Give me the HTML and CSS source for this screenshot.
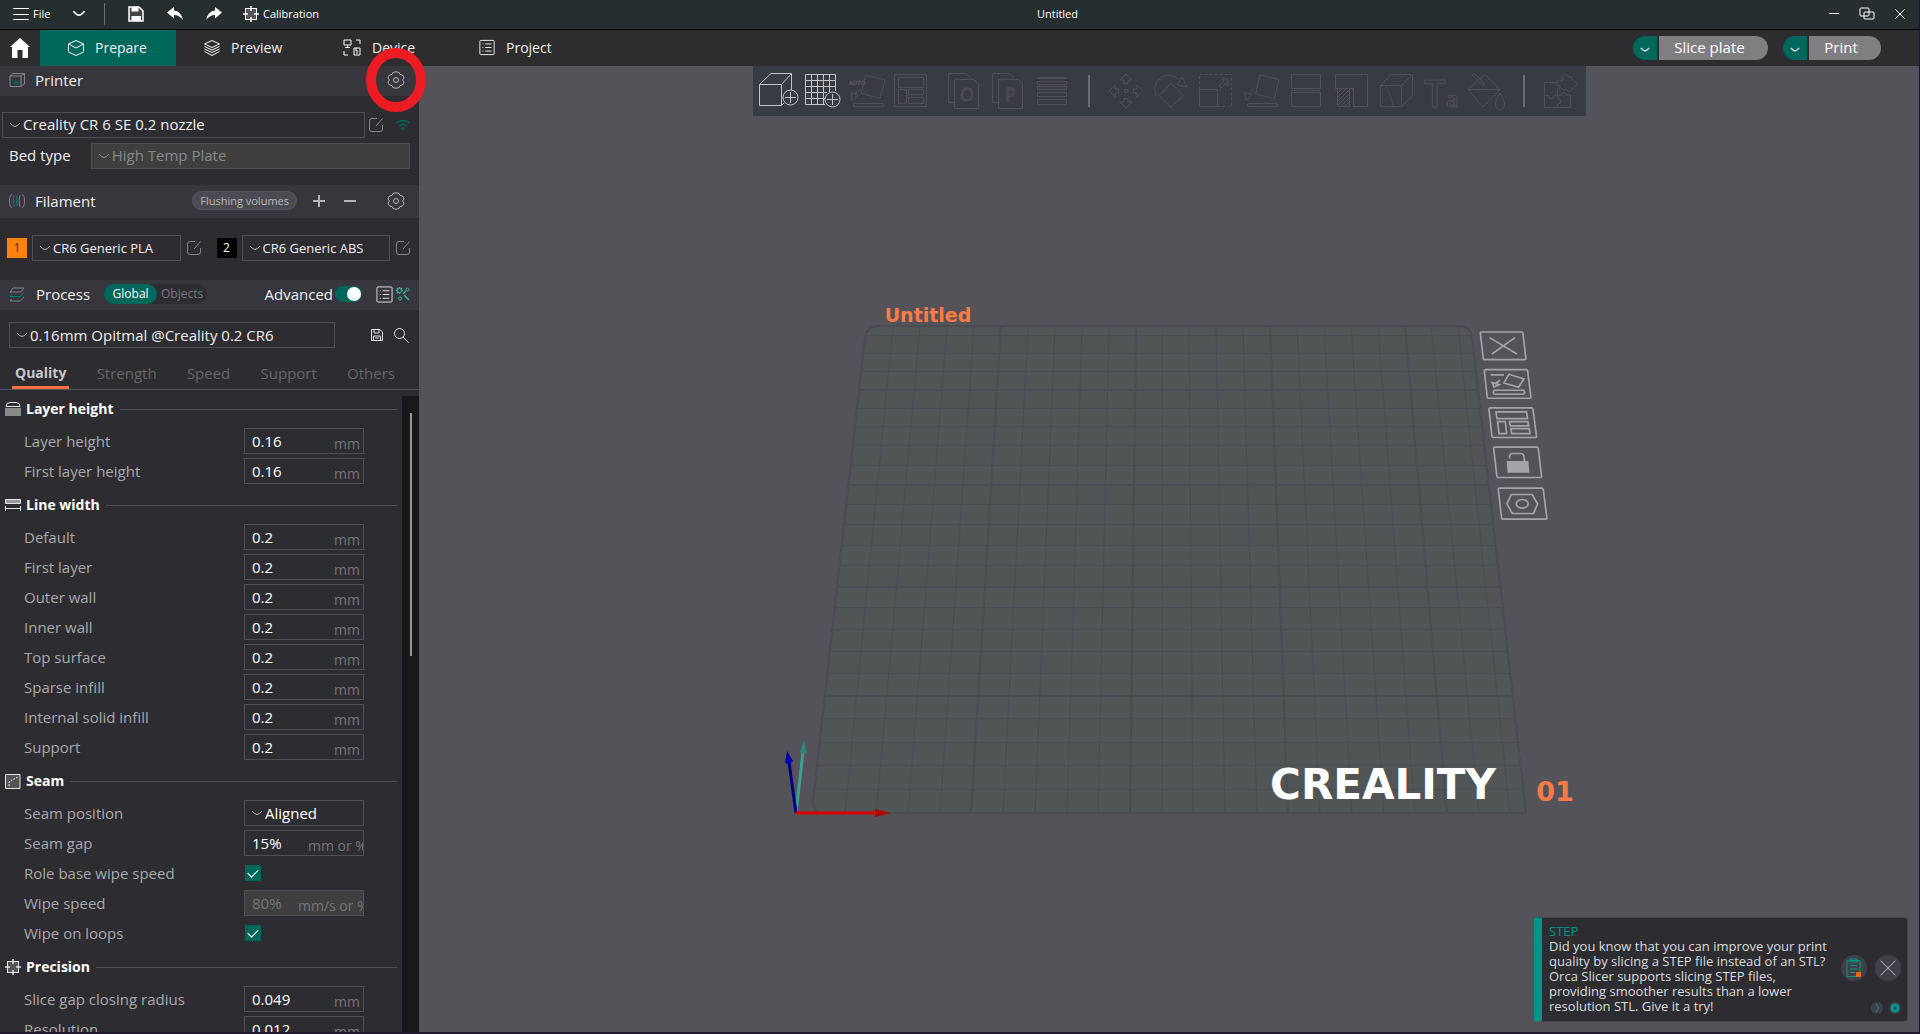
FILE: index.html
```html
<!DOCTYPE html>
<html lang="en">
<head>
<meta charset="utf-8">
<title>Untitled</title>
<link rel="stylesheet" href="styles.css">
</head>
<body>
<svg class="defs" aria-hidden="true">
  <symbol id="chevron" viewBox="0 0 12 8"><path d="M1 2Q4 5.500 6 5.500T11 2"/></symbol>
  <symbol id="edit" viewBox="0 0 16 16"><path d="M9 1.500H4Q1.500 1.500 1.500 4V12Q1.500 14.500 4 14.500H12Q14.500 14.500 14.500 12V8M8 9 14.500 1.500"/></symbol>
  <symbol id="gear" viewBox="0 0 18 18"><circle cx="9" cy="9" r="2.500"/><path d="M6 1.500Q9 0 12 1.500L13 3.500 15.500 4Q17 6 17 7L15.500 9 17 11Q17 12 15.500 14L13 14.500 12 16.500Q9 18 6 16.500L5 14.500 2.500 14Q1 12 1 11L2.500 9 1 7Q1 6 2.500 4L5 3.500Z"/></symbol>
  <symbol id="list" viewBox="0 0 18 18"><rect x="1" y="1" width="16" height="16" rx="1"/><path d="M4 5H5M4 9H5M4 13H5M7 5H14M7 9H14M7 13H14"/></symbol>
  <symbol id="target" viewBox="0 0 16 16"><rect x="2.500" y="2.500" width="11" height="11" fill="#555"/><path d="M8 0V5M8 11V16M0 8H5M11 8H16" stroke-width="1.500"/></symbol>
</svg>

<header class="titlebar">
  <div class="title-left">
    <button class="tb menu"><svg class="ic" width="16" height="14" viewBox="0 0 16 14"><path d="M0 1.500H16M0 7.500H16M0 12.500H16"/></svg>File</button>
    <button class="tb more" aria-label="More"><svg class="ic strong" width="14" height="9"><use href="#chevron"/></svg></button>
    <span class="divider"></span>
    <button class="tb tool" aria-label="Save"><svg width="16" height="16" viewBox="0 0 16 16"><path d="M1 1H11L15 5V15H1Z" fill="#444" stroke="#fff" stroke-width="1.500"/><path d="M3.500 1H10.500V5.500H3.500ZM3.500 10H13V15H3.500Z" fill="#fff"/></svg></button>
    <button class="tb tool" aria-label="Undo"><svg width="16" height="13" viewBox="0 0 16 13"><path d="M0 5.500 7 0V3.500Q14 4 16 13 12 8 7 8V11.500Z" fill="#fff"/></svg></button>
    <button class="tb tool" aria-label="Redo"><svg width="16" height="13" viewBox="0 0 16 13"><path d="M16 5.500 9 0V3.500Q2 4 0 13 4 8 9 8V11.500Z" fill="#fff"/></svg></button>
    <button class="tb calib"><svg class="ic" width="16" height="16"><use href="#target"/></svg>Calibration</button>
  </div>
  <h1 class="title">Untitled</h1>
  <div class="window-buttons">
    <button class="tb" aria-label="Minimize"><svg class="ic" width="10" height="10"><path d="M0 4.500H10"/></svg></button>
    <button class="tb" aria-label="Restore"><svg class="ic" width="16" height="14" viewBox="0 0 16 14"><rect x="1" y="1" width="9" height="8" rx="1"/><rect x="5" y="5" width="10" height="7" rx="1"/></svg></button>
    <button class="tb" aria-label="Close"><svg class="ic" width="10" height="10"><path d="M0.500 0.500 9.500 9.500M9.500 0.500 0.500 9.500"/></svg></button>
  </div>
</header>

<nav class="nav">
  <a class="home" href="#home" aria-label="Home"><svg width="20" height="20" viewBox="0 0 20 20"><path d="M10 0 20 9H18V20H12.500V12H7.500V20H2V9H0Z" fill="#fff"/></svg></a>
  <a class="tab active" href="#prepare"><svg class="ic" width="16" height="16" viewBox="0 0 16 16"><path d="M8 0.500 15.500 4V12L8 15.500 0.500 12V4ZM0.500 4 8 8 15.500 4"/></svg>Prepare</a>
  <a class="tab preview" href="#preview"><svg class="ic" width="16" height="16" viewBox="0 0 16 16"><path d="M8 0.500 15.500 4 8 7.500 0.500 4ZM0.500 6.500 8 10 15.500 6.500M0.500 9 8 12.500 15.500 9M0.500 11.500 8 15.500 15.500 11.500"/></svg>Preview</a>
  <a class="tab" href="#device"><svg class="ic" width="18" height="17" viewBox="0 0 18 17"><path d="M1 1H8V6H1ZM4.500 6V8M2 8.500H7M13 1H17V5M1 12V16H5M11 9H17V16H11ZM13 9V12H15M13 14H15"/></svg>Device</a>
  <a class="tab" href="#project"><svg class="ic" width="16" height="17"><use href="#list"/></svg>Project</a>
  <div class="actions">
    <div class="split"><button class="drop" aria-label="Slice options"><svg class="ic strong" width="10" height="7"><use href="#chevron"/></svg></button><button class="main slice">Slice plate</button></div>
    <div class="split"><button class="drop" aria-label="Print options"><svg class="ic strong" width="10" height="7"><use href="#chevron"/></svg></button><button class="main">Print</button></div>
  </div>
</nav>

<div class="workspace">
<aside class="sidebar">
  <div class="bar printer-bar">
    <svg class="ic dim" width="16" height="14" viewBox="0 0 16 14"><path d="M1 3H12V13.500H1ZM1 3 4 .5H15.500V11L12 13.500M12 3 15.500 .5"/><path d="M3 11 6 8H9V11Z" fill="#00675b" stroke="none"/></svg>
    <h2>Printer</h2>
    <button class="tb gear" aria-label="Printer settings"><svg class="ic soft" width="18" height="18"><use href="#gear"/></svg></button>
    <svg class="ring" width="62" height="66" viewBox="0 0 62 66"><ellipse cx="31" cy="33" rx="25" ry="27"/></svg>
  </div>
  <div class="printer-body">
    <div class="line">
      <label class="combo grow"><svg class="ic soft" width="12" height="8"><use href="#chevron"/></svg><select aria-label="Printer"><option>Creality CR 6 SE 0.2 nozzle</option></select></label>
      <button class="tb" aria-label="Edit printer"><svg class="ic dim" width="16" height="16"><use href="#edit"/></svg></button>
      <button class="tb wifi" aria-label="Connection"><svg width="14" height="12" viewBox="0 0 14 12"><path d="M0.500 4Q7-1 13.500 4M3 7Q7 3.500 11 7" fill="none" stroke="#00695d" stroke-width="1.500"/><circle cx="7" cy="9.500" r="1.500" fill="#00695d"/></svg></button>
    </div>
    <div class="line bed">
      <label for="bed">Bed type</label>
      <span class="combo grow off"><svg class="ic dim" width="12" height="8"><use href="#chevron"/></svg><select id="bed" disabled><option>High Temp Plate</option></select></span>
    </div>
  </div>

  <div class="bar filament-bar">
    <svg class="ic dim" width="16" height="14" viewBox="0 0 16 14"><path d="M3 .5Q.5 1 .5 7T3 13.500M13 .5Q15.500 1 15.500 7T13 13.500M11 1Q9 7 11 13"/><path d="M5 1Q3.500 7 5 13M8 2Q6.500 7 8 12" stroke="#00877a"/></svg>
    <h2>Filament</h2>
    <button class="flush">Flushing volumes</button>
    <button class="tb pm" aria-label="Add filament"><svg class="ic soft thick" width="12" height="12"><path d="M6 0V12M0 6H12"/></svg></button>
    <button class="tb pm" aria-label="Remove filament"><svg class="ic soft thick" width="12" height="12"><path d="M0 6H12"/></svg></button>
    <button class="tb gear" aria-label="Filament settings"><svg class="ic soft" width="18" height="18"><use href="#gear"/></svg></button>
  </div>
  <div class="filaments">
    <div class="filament"><span class="swatch orange">1</span><label class="combo small grow"><svg class="ic soft" width="12" height="8"><use href="#chevron"/></svg><select aria-label="Filament 1"><option>CR6 Generic PLA</option></select></label><button class="tb" aria-label="Edit filament 1"><svg class="ic dim" width="16" height="16"><use href="#edit"/></svg></button></div>
    <div class="filament"><span class="swatch black">2</span><label class="combo small grow"><svg class="ic soft" width="12" height="8"><use href="#chevron"/></svg><select aria-label="Filament 2"><option>CR6 Generic ABS</option></select></label><button class="tb" aria-label="Edit filament 2"><svg class="ic dim" width="16" height="16"><use href="#edit"/></svg></button></div>
  </div>

  <div class="bar process-bar">
    <svg class="ic dim" width="16" height="15" viewBox="0 0 16 15"><path d="M4 1H15L11.500 5H1ZM15 10 11.500 14H1L2.500 12"/><path d="M15 5.500 11.500 9.500H1L2.500 7.500" stroke="#00877a"/></svg>
    <h2>Process</h2>
    <div class="scope"><button class="on">Global</button><button>Objects</button></div>
    <label class="adv">Advanced<input type="checkbox" class="toggle" checked></label>
    <button class="tb" aria-label="Compare"><svg class="ic light" width="17" height="17"><use href="#list"/></svg></button>
    <button class="tb tune" aria-label="Tune"><svg class="ic teal" width="14" height="14" viewBox="0 0 14 14"><circle cx="3.500" cy="3.500" r="2"/><circle cx="11.500" cy="2.500" r="1.500"/><circle cx="4" cy="11.500" r="1.500"/><path d="M8 8 13 13M10 4 7 7M3.500 0V1.500M0 3.500H1.500M3.500 5.500V7M5.500 3.500H7M1 1 2 2M6 1 5 2M1 6 2 5" stroke-width="1.500"/></svg></button>
  </div>
  <div class="preset">
    <label class="combo grow"><svg class="ic soft" width="12" height="8"><use href="#chevron"/></svg><select aria-label="Process preset"><option>0.16mm Opitmal @Creality 0.2 CR6</option></select></label>
    <button class="tb" aria-label="Save preset"><svg class="ic light" width="12" height="12" viewBox="0 0 12 12"><path d="M.5 .5H9L11.500 3V11.500H.5ZM3 .5V4H8V.5M2.500 11.500V7H9.500V11.500M4 9H8"/></svg></button>
    <button class="tb" aria-label="Search"><svg class="ic light" width="15" height="15" viewBox="0 0 15 15"><circle cx="5.500" cy="5.500" r="5"/><path d="M9 9 14.500 14.500"/></svg></button>
  </div>
  <div class="tabs">
    <a class="on" href="#quality">Quality</a><a href="#strength">Strength</a><a href="#speed">Speed</a><a href="#support">Support</a><a href="#others">Others</a>
  </div>

  <div class="scroller">
    <form class="settings">
      <h3><svg class="ic light" width="16" height="14" viewBox="0 0 16 14"><path d="M1 4.500Q1 .5 5 .5H11Q15 .5 15 4.500ZM0 7H16M0 10H16M0 13H16"/><path d="M0 8.500H16M0 11.500H16" stroke="#888"/></svg>Layer height</h3>
      <div class="row"><label for="f1">Layer height</label><span class="field"><input id="f1" value="0.16"><i>mm</i></span></div>
      <div class="row"><label for="f2">First layer height</label><span class="field"><input id="f2" value="0.16"><i>mm</i></span></div>
      <h3><svg class="ic light" width="16" height="12" viewBox="0 0 16 12"><path d="M.5 .5H15.500V4.500H.5Z" fill="#999"/><path d="M.5 7V12M15.500 7V12M.5 9.500H15.500"/></svg>Line width</h3>
      <div class="row"><label for="f3">Default</label><span class="field"><input id="f3" value="0.2"><i>mm</i></span></div>
      <div class="row"><label for="f4">First layer</label><span class="field"><input id="f4" value="0.2"><i>mm</i></span></div>
      <div class="row"><label for="f5">Outer wall</label><span class="field"><input id="f5" value="0.2"><i>mm</i></span></div>
      <div class="row"><label for="f6">Inner wall</label><span class="field"><input id="f6" value="0.2"><i>mm</i></span></div>
      <div class="row"><label for="f7">Top surface</label><span class="field"><input id="f7" value="0.2"><i>mm</i></span></div>
      <div class="row"><label for="f8">Sparse infill</label><span class="field"><input id="f8" value="0.2"><i>mm</i></span></div>
      <div class="row"><label for="f9">Internal solid infill</label><span class="field"><input id="f9" value="0.2"><i>mm</i></span></div>
      <div class="row"><label for="f10">Support</label><span class="field"><input id="f10" value="0.2"><i>mm</i></span></div>
      <h3><svg class="ic light" width="16" height="15" viewBox="0 0 16 15"><path d="M.5 .5H15V14.500H.5Z" fill="#555"/><path d="M4 12V8L7 6 13 3" stroke-dasharray="2 1"/></svg>Seam</h3>
      <div class="row"><label for="f11">Seam position</label><span class="combo seam"><svg class="ic soft" width="12" height="8"><use href="#chevron"/></svg><select id="f11"><option>Aligned</option></select></span></div>
      <div class="row"><label for="f12">Seam gap</label><span class="field long"><input id="f12" value="15%"><i>mm or %</i></span></div>
      <div class="row"><label for="f13">Role base wipe speed</label><input id="f13" type="checkbox" class="check" checked></div>
      <div class="row"><label for="f14">Wipe speed</label><span class="field long off"><input id="f14" value="80%" disabled><i>mm/s or %</i></span></div>
      <div class="row"><label for="f15">Wipe on loops</label><input id="f15" type="checkbox" class="check" checked></div>
      <h3><svg class="ic light" width="16" height="16"><use href="#target"/></svg>Precision</h3>
      <div class="row"><label for="f16">Slice gap closing radius</label><span class="field"><input id="f16" value="0.049"><i>mm</i></span></div>
      <div class="row"><label for="f17">Resolution</label><span class="field"><input id="f17" value="0.012"><i>mm</i></span></div>
    </form>
    <div class="track"><div class="thumb"></div></div>
  </div>
</aside>

<main class="canvas">
  <svg class="scene" viewBox="419 66 1500 966" role="img" aria-label="Build plate">
    <clipPath id="plate"><path d="M880 326H1460Q1470 326 1472 337L1526 813H823Q812 811 813 801L865 337Q867 326 880 326Z"/></clipPath>
    <path class="bed-shape" d="M880 326H1460Q1470 326 1472 337L1526 813H823Q812 811 813 801L865 337Q867 326 880 326Z"/>
    <g clip-path="url(#plate)">
      <path class="grid" d="M800 789.500H1530M800 765.500H1530M800 742.500H1530M800 718.500H1530M800 673.500H1530M800 651.500H1530M800 629.500H1530M800 607.500H1530M800 565.500H1530M800 545.500H1530M800 524.500H1530M800 504.500H1530M800 465.500H1530M800 445.500H1530M800 426.500H1530M800 408.500H1530M800 371.500H1530M800 353.500H1530M800 335.500H1530M893 326 845 814M920 326 876 814M947 326 908 814M974 326 940 814M1028 326 1003 814M1055 326 1035 814M1082 326 1067 814M1109 326 1098 814M1162 326V814M1189 326 1193 814M1216 326 1225 814M1243 326 1257 814M1297 326 1320 814M1324 326 1352 814M1351 326 1384 814M1378 326 1415 814M1431 326 1479 814M1458 326 1510 814"/>
      <path class="grid bold" d="M800 696H1530M800 587H1530M800 485H1530M800 390H1530M1001 326 971 814M1136 326 1130 814M1270 326 1288 814M1405 326 1447 814"/>
    </g>
    <text class="plate-name" x="928" y="322">Untitled</text>
    <text class="plate-number" x="1555" y="801">01</text>
    <text class="brand" x="1383" y="799">CREALITY</text>
    <g class="plate-icons" transform="translate(1440 310) scale(0.333)">
      <path d="M124 66H245Q248 66 249 69L258 146Q258 149 255 149H134Q131 149 130 146L121 69Q121 66 124 66ZM149 83 231 132M225 83 156 132"/>
      <path d="M136 179H259Q262 179 263 182L273 262Q273 265 270 265H146Q143 265 142 262L133 182Q133 179 136 179ZM207 193 252 207 236 232 192 219ZM163 241H251Q257 247 251 253H163Q157 247 163 241ZM157 218 178 224 162 231ZM168 219 181 211M152 195H192" />
      <path d="M151 294H275Q278 294 279 297L290 380Q290 383 287 383H160Q157 383 156 380L147 297Q147 294 151 294ZM168 306H260L263 326H171ZM173 335H196L200 371H177ZM209 335H264L266 348H211ZM213 356H268L270 371H215Z"/>
      <path d="M165 412H291Q294 412 295 415L305 500Q305 503 302 503H175Q172 503 171 500L161 415Q161 412 165 412ZM209 446V438Q210 431 218 431H242Q251 431 252 440L254 456"/>
      <path d="M203 456H263L266 486H205Z" fill="#a5a4aa"/>
      <path d="M179 535H306Q309 535 310 538L321 625Q321 628 318 628H189Q186 628 185 625L175 538Q175 535 179 535ZM214 554H277L293 582 281 611H217L201 582Z"/>
      <ellipse cx="247" cy="582" rx="18" ry="13"/>
    </g>
    <path d="M796 813 803 752" stroke="#3d9f8e" stroke-width="3"/><path d="M804 741 807 753Q803 756 800 752Z" fill="#2f8576"/>
    <path d="M796 813 789 762" stroke="#000080" stroke-width="3"/><path d="M787 751 793 761Q789 765 785 763Z" fill="#0000a8"/>
    <path d="M796 813H876" stroke="#dc0000" stroke-width="3"/><path d="M875 809 891 813 875 817Z" fill="#b40000"/>
  </svg>

  <div class="toolbar">
    <button aria-label="Add"><svg class="lit" viewBox="0 0 44 50"><path d="M3.500 18.500H25.500V39.500H3.500ZM3.500 18.500 15 7.500H35.500V24M25.500 18.500 35.500 7.500M25.500 39.500 28 37"/><circle cx="34.500" cy="31.500" r="7.500"/><path d="M29 31.500H40M34.500 26V37"/></svg></button>
    <button aria-label="Add plate"><svg class="lit" viewBox="0 0 44 50"><path d="M35.500 25V8.500H5.500V38.500H25M11.500 8.500V38.500M17.500 8.500V38.500M23.500 8.500V38.500M29.500 8.500V26M5.500 14.500H35.500M5.500 20.500H35.500M5.500 26.500H27M5.500 32.500H25"/><circle cx="32.500" cy="33.500" r="7.500"/><path d="M27 33.500H38M32.500 28V39"/></svg></button>
    <button aria-label="Auto orient" disabled><svg viewBox="0 0 44 50"><text x="5" y="19" font-size="6">AUTO</text><path d="M22 9 41 14 36 32.500 17 27ZM7 26.500 14 29 8 34.500ZM11 28Q14 24 17 23"/><rect x="9.500" y="37.500" width="30" height="3" rx="1.500"/></svg></button>
    <button aria-label="Arrange" disabled><svg viewBox="0 0 44 50"><path d="M6.500 8.500H38.500V40.500H6.500ZM10.500 11.500H35.500V21.500H10.500ZM10.500 23.500H18.500V37.500H10.500ZM20.500 23.500H35.500V28.500H20.500ZM20.500 31.500H35.500V37.500H20.500Z"/></svg></button>
    <span class="gap"></span>
    <button aria-label="Split to objects" disabled><svg viewBox="0 0 44 50"><path d="M12 36.500H6.500V7.500H24L28.500 12M12.500 13.500H32L36.500 18V42.500H12.500Z"/><text x="18" y="35" font-size="18">O</text></svg></button>
    <button aria-label="Split to parts" disabled><svg viewBox="0 0 44 50"><path d="M12 36.500H6.500V7.500H24L28.500 12M12.500 13.500H32L36.500 18V42.500H12.500Z"/><text x="19" y="35" font-size="18">P</text></svg></button>
    <button aria-label="Variable layer height" disabled><svg viewBox="0 0 44 50"><path d="M7 11.500H37M7 12.500H37M7.500 15.500H36.500V18.500H7.500ZM7.500 20.500H36.500V23.500H7.500ZM7.500 26.500H36.500V30.500H7.500ZM7.500 33.500H36.500V38.500H7.500Z"/></svg></button>
    <span class="sep"></span>
    <button class="wide" aria-label="Move" disabled><svg viewBox="0 0 44 50"><path d="M20.500 23.500H23.500V26.500H20.500ZM22 8 28 14H24V17.500H20V14H16ZM22 42 28 36H24V32.500H20V36H16ZM5 25 11 19V23H14.500V27H11V31ZM39 25 33 19V23H29.500V27H33V31Z"/></svg></button>
    <button class="wide" aria-label="Rotate" disabled><svg viewBox="0 0 44 50"><path d="M22 17.500 34 29.500 22 41.500 10 29.500ZM7 30Q3 17 12 11.500 21 6.500 30 13.500M33 11 38 21 28 19Z"/></svg></button>
    <button class="wide" aria-label="Scale" disabled><svg viewBox="0 0 44 50"><path d="M5.500 8.500H37.500V40.500H24M5.500 23V8.500" stroke-dasharray="3 2"/><path d="M5.500 23.500H23.500V40.500H5.500ZM25 20 30 15 27.500 13H34V20L31.500 17 27 22Z"/></svg></button>
    <button class="wide" aria-label="Lay on face" disabled><svg viewBox="0 0 44 50"><path d="M21 9 40 13.500 35.500 32.500 16.500 28ZM6 26.500 13 29 7 34.500ZM10 28Q12 24 15 22.500"/><rect x="8.500" y="37.500" width="30" height="3" rx="1.500"/></svg></button>
    <button class="wide" aria-label="Cut" disabled><svg viewBox="0 0 44 50"><path d="M7.500 8.500H36.500V22.500H7.500ZM7.500 26.500H36.500V40.500H7.500Z"/><path d="M7 24.500H37" stroke-dasharray="2 1"/></svg></button>
    <button class="wide" aria-label="Boolean" disabled><svg viewBox="0 0 44 50"><path d="M6.500 8.500H38.500V40.500H24.500V22.500H6.500ZM8.500 22.500V40.500H20.500V22.500M9 27 13 23M9 31 17 23M9 35 20 24M9 39 20 28M12 40 20 32M16 40 20 36"/></svg></button>
    <button class="wide" aria-label="Seam painting" disabled><svg viewBox="0 0 44 50"><path d="M6.500 19.500H27.500V40.500H6.500ZM6.500 19.500 17 8.500H38.500V30L27.500 40.500M27.500 19.500 38.500 8.500"/><path d="M12 20 15 28 17 32 19 40" stroke-dasharray="2 1"/></svg></button>
    <button class="wide" aria-label="Text" disabled><svg viewBox="0 0 44 50"><text class="heavy" x="5" y="41" font-size="38">T</text><text class="heavy" x="27" y="41" font-size="22">a</text></svg></button>
    <button class="wide" aria-label="Color painting" disabled><svg viewBox="0 0 44 50"><path d="M21 8.500 36 23.500 19 41 4 23.500ZM4 23.500H36M8 9 10 7.500 21 18 19 19.500ZM36 27Q40.500 35 40.500 38.500 40 43.500 36 43.500T31.500 38.500Q31.500 35 36 27Z"/></svg></button>
    <span class="sep"></span>
    <button aria-label="Assembly" disabled><svg viewBox="0 0 44 50"><path d="M5.500 16.500H18V19Q22 19 21 23H18.500V29.500H15Q15 33 12 32.500T9.500 29.500H5.500ZM5.500 29.500V41.500H18.500V38Q22 38 21.500 35T18.500 32M18.500 41.500H31.500V29H27Q26 26 24 26.500T22.500 29.500H18.500M23 23 17 17 20 14Q23 16 24 14T22 11L26 8 30 11Q33 10 33 13L38.500 18 30 26 27 23Q24 26 23 23Z"/></svg></button>
  </div>

  <section class="notice">
    <div class="notice-text"><h4>STEP</h4><p>Did you know that you can improve your print quality by slicing a STEP file instead of an STL? Orca Slicer supports slicing STEP files, providing smoother results than a lower resolution STL. Give it a try!</p></div>
    <div class="notice-side">
      <div class="pair">
        <button class="round" aria-label="Documentation"><svg width="16" height="20" viewBox="0 0 16 20"><path d="M1 2.500H14V18.500H1ZM4 1H11V4H4ZM4 7.500H11M4 11H11M4 14.500H9" fill="none" stroke="#009688"/><rect x="10" y="14" width="5" height="5" fill="#e86a10"/></svg></button>
        <button class="round" aria-label="Close"><svg class="ic soft" width="16" height="16"><path d="M.5 .5 15.500 15.500M15.500 .5 .5 15.500"/></svg></button>
      </div>
      <div class="pair low">
        <button class="round mini" aria-label="Next"><svg width="5" height="8" viewBox="0 0 5 8"><path d="M1 0 4 4 1 8" fill="none" stroke="#009688"/></svg></button>
        <button class="round mini" aria-label="Preferences"><svg width="10" height="10" viewBox="0 0 10 10"><circle cx="5" cy="5" r="3" fill="none" stroke="#009688" stroke-width="3"/></svg></button>
      </div>
    </div>
  </section>
</main>
</div>
</body>
</html>
```
FILE: styles.css
```css
* { box-sizing: border-box; }
body {
  margin: 0;
  height: 100vh;
  display: flex;
  flex-direction: column;
  overflow: hidden;
  background: #2d2c31;
  border-right: 1px solid #1b1240;
  border-bottom: 2px solid #241a30;
  color: #efeff0;
  font: 15px/20px "Open Sans", "Noto Sans", sans-serif;
}
h1, h2, h3, h4, p { margin: 0; font-size: inherit; font-weight: 400; }
button, input, select { font: inherit; color: inherit; }
a { color: inherit; text-decoration: none; }
.defs { position: absolute; width: 0; height: 0; }
.ic { fill: none; stroke: #fff; flex: none; }
.soft { stroke: #b5b5b8; }
.dim { stroke: #85858a; }
.light { stroke: #e4e4e6; }
.teal { stroke: #3fae9f; }
.thick { stroke-width: 2; }
.strong { stroke-width: 1.5; }
.tb {
  display: flex;
  align-items: center;
  justify-content: center;
  padding: 0;
  border: 0;
  background: none;
}

/* Title bar */
.titlebar {
  flex: none;
  height: 30px;
  display: flex;
  align-items: stretch;
  padding-bottom: 2px;
  background: #262e30;
  border-bottom: 1px solid #000;
  color: #fff;
  font-size: 11px;
}
.title-left { display: flex; align-items: center; padding-left: 13px; }
.menu { gap: 4px; width: 52px; justify-content: flex-start; }
.more { width: 28px; }
.divider { width: 1px; height: 22px; margin: 0 11px 0 11px; background: #6e7375; }
.tool { width: 39px; }
.calib { gap: 4px; margin-left: 10px; }
.title { flex: 1; display: flex; align-items: center; justify-content: center; }
.window-buttons { display: flex; padding: 0 3px 0 21px; }
.window-buttons .tb { width: 33px; }

/* Main navigation */
.nav {
  flex: none;
  height: 36px;
  display: flex;
  background: #2d2d2f;
}
.home { width: 40px; display: flex; align-items: center; justify-content: center; }
.tab { width: 136px; padding: 0 0 1px 28px; display: flex; align-items: center; gap: 11px; font-size: 14px; }
.tab.preview { width: 139px; }
.tab.active { background: #00675b; }
.actions { margin-left: auto; padding-right: 38px; display: flex; align-items: center; gap: 15px; }
.split { display: flex; gap: 2px; height: 24px; }
.drop, .main { border: 0; padding: 0; color: #fff; }
.drop { width: 24px; background: #00675b; border-radius: 12px 0 0 12px; }
.drop .ic { vertical-align: middle; }
.main { width: 72px; padding: 0 8px 2px 0; background: #7f7f82; border-radius: 0 12px 12px 0; }
.slice { width: 109px; }

.workspace { flex: 1; min-height: 0; display: flex; }

/* Sidebar */
.sidebar { position: relative; z-index: 1; width: 419px; flex: none; display: flex; flex-direction: column; }
.bar {
  flex: none;
  height: 30px;
  display: flex;
  align-items: center;
  padding: 0 14px 2px 9px;
  background: #37363c;
}
.bar h2 { margin-left: 10px; }
.printer-bar { position: relative; }
.printer-bar .gear { margin-left: auto; }
.ring { position: absolute; right: -8px; top: -19px; fill: none; stroke: #ec1c24; stroke-width: 10; pointer-events: none; }
.printer-body { padding: 15px 9px 16px 2px; display: grid; gap: 4px; }
.line { display: flex; align-items: center; gap: 3px; height: 27px; }
.bed { gap: 20px; padding-left: 7px; }
.bed label { padding-bottom: 2px; }
.wifi { margin-left: 9px; }
.combo {
  display: flex;
  align-items: center;
  gap: 2px;
  height: 26px;
  min-width: 0;
  padding-left: 6px;
  border: 1px solid #4f4e56;
}
.combo select {
  flex: 1;
  min-width: 0;
  padding: 0 0 1px;
  border: 0;
  outline: 0;
  appearance: none;
  background: transparent;
}
.grow { flex: 1; }
.combo.off { background: #3f3f3f; color: #88888c; }
.combo select:disabled { color: #88888c; opacity: 1; }

.filament-bar { height: 33px; }
.flush {
  height: 19px;
  margin-left: auto;
  margin-right: 16px;
  padding: 0 7px;
  border: 1px solid #57575f;
  border-radius: 10px;
  background: #4a4a51;
  color: #b9b9bd;
  font-size: 11px;
  line-height: 16px;
}
.pm { width: 12px; margin-right: 19px; }
.filament-bar .gear { margin-left: 12px; }
.filaments { display: flex; gap: 15px; padding: 17px 8px 19px 7px; }
.filament { flex: 1; display: flex; align-items: center; gap: 5px; }
.small { font-size: 13px; }
.swatch { width: 20px; height: 20px; text-align: center; font-size: 12px; }
.orange { background: #ff820a; color: #2d2c31; }
.black { background: #000; color: #fff; }

.process-bar { padding-right: 9px; }
.process-bar h2 { margin-left: 11px; }
.scope {
  display: flex;
  height: 20px;
  margin-left: 14px;
  border-radius: 10px;
  background: #2d2c31;
  font-size: 12px;
  line-height: 18px;
}
.scope button { width: 50px; padding: 0; border: 0; border-radius: 10px; background: none; color: #77777c; }
.scope .on { width: 53px; background: #00675b; color: #fff; }
.adv { margin-left: auto; margin-right: 14px; display: flex; align-items: center; gap: 2px; }
.toggle {
  appearance: none;
  width: 27px;
  height: 16px;
  margin: 0;
  padding: 1px;
  display: flex;
  justify-content: flex-end;
  border-radius: 8px;
  background: #00675b;
}
.toggle::before { content: ""; width: 14px; height: 14px; border-radius: 7px; background: #fff; }
.tune { margin-left: 3px; }

.preset { flex: none; display: flex; align-items: center; gap: 11px; padding: 12px 10px 10px 9px; }
.preset .combo { margin-right: 25px; }
.tabs {
  flex: none;
  display: flex;
  height: 32px;
  padding: 0 21px 0 12px;
  justify-content: space-between;
  border-bottom: 1px solid #55545c;
  color: #65656a;
}
.tabs a { padding: 5px 3px 0; }
.tabs .on { border-bottom: 3px solid #ff7043; color: #c8c8cb; font-weight: 700; font-size: 14px; }

.scroller { flex: 1; min-height: 0; display: flex; overflow: hidden; }
.settings { flex: 1; padding-left: 5px; }
.settings h3 {
  display: flex;
  align-items: center;
  gap: 5px;
  height: 36px;
  padding: 2px 5px 0 0;
  font-weight: 700;
  color: #fff;
  font-size: 14px;
}
.settings h3::after { content: ""; flex: 1; height: 1px; margin-left: 1px; background: #4f4e56; }
.row { display: flex; align-items: center; height: 30px; padding-left: 19px; color: #a9a9ad; }
.row label { width: 220px; }
.field, .seam { width: 120px; height: 26px; color: #fff; }
.field { display: flex; overflow: hidden; border: 1px solid #4f4e56; padding-left: 7px; }
.field input { width: 82px; padding: 0 0 1px; border: 0; outline: 0; background: none; flex: none; }
.field i { padding-top: 6px; line-height: 18px; font-style: normal; color: #75757a; white-space: nowrap; font-size: 14px; }
.field.long input { width: 56px; }
.field.long.off input { width: 46px; color: #75757a; }
.field.off { background: #3f3f3f; }
.check {
  appearance: none;
  width: 16px;
  height: 16px;
  margin: 0 0 0 1px;
  display: grid;
  place-items: center;
  border-radius: 1px;
  background: #00675b;
}
.check::before {
  content: "";
  width: 9px;
  height: 5px;
  margin-bottom: 3px;
  border: solid #fff;
  border-width: 0 0 1px 1px;
  rotate: -45deg;
}
.track { width: 17px; margin-top: 6px; padding: 17px 0 0 8px; background: #181818; }
.thumb { width: 2px; height: 243px; background: #98989c; }

/* 3D canvas */
.canvas { flex: 1; min-width: 0; position: relative; background: #55535a; }
.scene { position: absolute; inset: 0; width: 100%; height: 100%; }
.bed-shape { fill: #515556; stroke: #4c4b54; stroke-width: 2; }
.grid { fill: none; stroke: #4b4c54; stroke-width: 1; }
.grid.bold { stroke-width: 2; }
.scene text { font-family: "DejaVu Sans", sans-serif; font-weight: 700; text-anchor: middle; }
.plate-name { fill: #ff7a45; font-size: 19px; }
.plate-number { fill: #f47a4a; font-size: 27px; }
.scene .brand { fill: #fff; font-size: 42px; }
.plate-icons { fill: none; stroke: #a5a4aa; stroke-width: 5; }

.toolbar {
  position: relative;
  display: flex;
  width: max-content;
  height: 50px;
  margin: 0 auto;
  padding: 0 3px;
  background: #393b42;
}
.toolbar button { width: 44px; height: 50px; padding: 0; border: 0; background: none; }
.toolbar .wide { width: 45px; }
.toolbar svg { display: block; width: 44px; height: 50px; fill: none; stroke: #504f59; }
.toolbar .lit { stroke: #c4c4c6; }
.toolbar .heavy { font-weight: 600; }
.gap { width: 10px; }
.sep { width: 2px; height: 32px; margin: 9px 14px; background: #6b6c70; }

.notice {
  position: absolute;
  right: 11px;
  bottom: 10px;
  width: 374px;
  display: flex;
  justify-content: space-between;
  padding: 6px 6px 7px 7px;
  border: 1px solid #46454c;
  border-left: 8px solid #009688;
  border-radius: 4px;
  background: #2d2c31;
  color: #dcdcde;
  font-size: 13px;
  line-height: 15px;
}
.notice h4 { color: #009688; }
.notice-text { width: 280px; }
.notice-side { display: flex; flex-direction: column; align-items: flex-end; justify-content: flex-end; }
.pair { display: flex; gap: 8px; }
.pair.low { gap: 6px; margin-top: 21px; }
.round {
  width: 26px;
  height: 26px;
  display: grid;
  place-items: center;
  padding: 0;
  border: 0;
  border-radius: 50%;
  background: #413f48;
}
.mini { width: 12px; height: 12px; }
```
